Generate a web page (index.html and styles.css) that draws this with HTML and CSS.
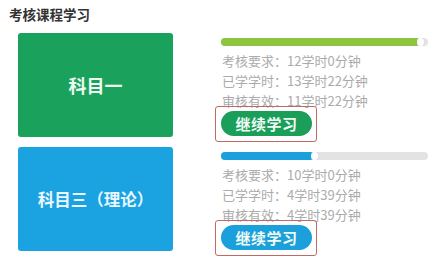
FILE: index.html
```html
<!DOCTYPE html>
<html lang="zh">
<head>
<meta charset="utf-8">
<title>考核课程学习</title>
<link rel="stylesheet" href="styles.css">
</head>
<body>
<div class="page">
  <h1 class="title">考核课程学习</h1>
  <div class="course">
    <div class="card card-green">科目一</div>
    <div class="info">
      <div class="track"><div class="fill fill-green" style="width: 96%"></div><div class="knob"></div></div>
      <div class="lines">
        <div class="line">考核要求：12学时0分钟</div>
        <div class="line">已学学时：13学时22分钟</div>
        <div class="line">审核有效：11学时22分钟</div>
      </div>
      <div class="mark"><button class="btn btn-green">继续学习</button></div>
    </div>
  </div>
  <div class="course">
    <div class="card card-blue">科目三（理论）</div>
    <div class="info">
      <div class="track"><div class="fill fill-blue" style="width: 45%"></div><div class="knob"></div></div>
      <div class="lines">
        <div class="line">考核要求：10学时0分钟</div>
        <div class="line">已学学时：4学时39分钟</div>
        <div class="line">审核有效：4学时39分钟</div>
      </div>
      <div class="mark"><button class="btn btn-blue">继续学习</button></div>
    </div>
  </div>
</div>
</body>
</html>
```
FILE: styles.css
```css
html, body {
  margin: 0;
  padding: 0;
  background: #ffffff;
}
body {
  font-family: "Noto Sans CJK SC", "Noto Sans", sans-serif;
  width: 441px;
  height: 273px;
  overflow: hidden;
}
.page {
  padding: 4px 0 0 9px;
}
.title {
  margin: 0;
  font-size: 13.5px;
  line-height: 20px;
  font-weight: 700;
  color: #333333;
}
.course {
  display: flex;
  align-items: flex-start;
  margin-top: 9px;
}
.course + .course {
  margin-top: 5px;
}
.card {
  width: 155px;
  height: 104px;
  margin-left: 9px;
  border-radius: 3px;
  display: flex;
  align-items: center;
  justify-content: center;
  font-size: 16.5px;
  font-weight: 700;
  color: #eefaf2;
}
.card-green {
  background: #1aa25c;
  font-size: 18px;
}
.card-blue {
  background: #1aa3e0;
  color: #eaf7ff;
}
.info {
  margin-left: 48px;
  width: 207px;
  padding-top: 5px;
}
.track {
  position: relative;
  height: 8px;
  border-radius: 4px;
  background: #e3e3e3;
  display: flex;
}
.fill {
  height: 8px;
  border-radius: 4px;
}
.fill-green {
  background: #8cc63e;
}
.fill-blue {
  background: #1ba0dc;
}
.knob {
  width: 7px;
  height: 8px;
  margin-left: -3px;
  border-radius: 4px;
  background: #ffffff;
  box-shadow: 0 0 1px rgba(0,0,0,0.15);
}
.lines {
  padding-top: 5px;
  padding-left: 1px;
}
.line {
  font-size: 13px;
  line-height: 20px;
  color: #ababab;
  white-space: nowrap;
}
.mark {
  display: inline-flex;
  margin-top: -5px;
  margin-left: -6px;
  padding: 4px 4px 5px 5px;
  border: 1.5px solid #c06a63;
  border-radius: 3px;
}
.btn {
  border: none;
  width: 91px;
  height: 25px;
  border-radius: 13px;
  font-family: "Noto Sans CJK SC", "Noto Sans", sans-serif;
  font-size: 15px;
  font-weight: 700;
  color: #f2fbf5;
  padding: 0;
  letter-spacing: 0.5px;
}
.btn-green {
  background: #1a9e5a;
}
.btn-blue {
  background: #1ba0dc;
}
```
